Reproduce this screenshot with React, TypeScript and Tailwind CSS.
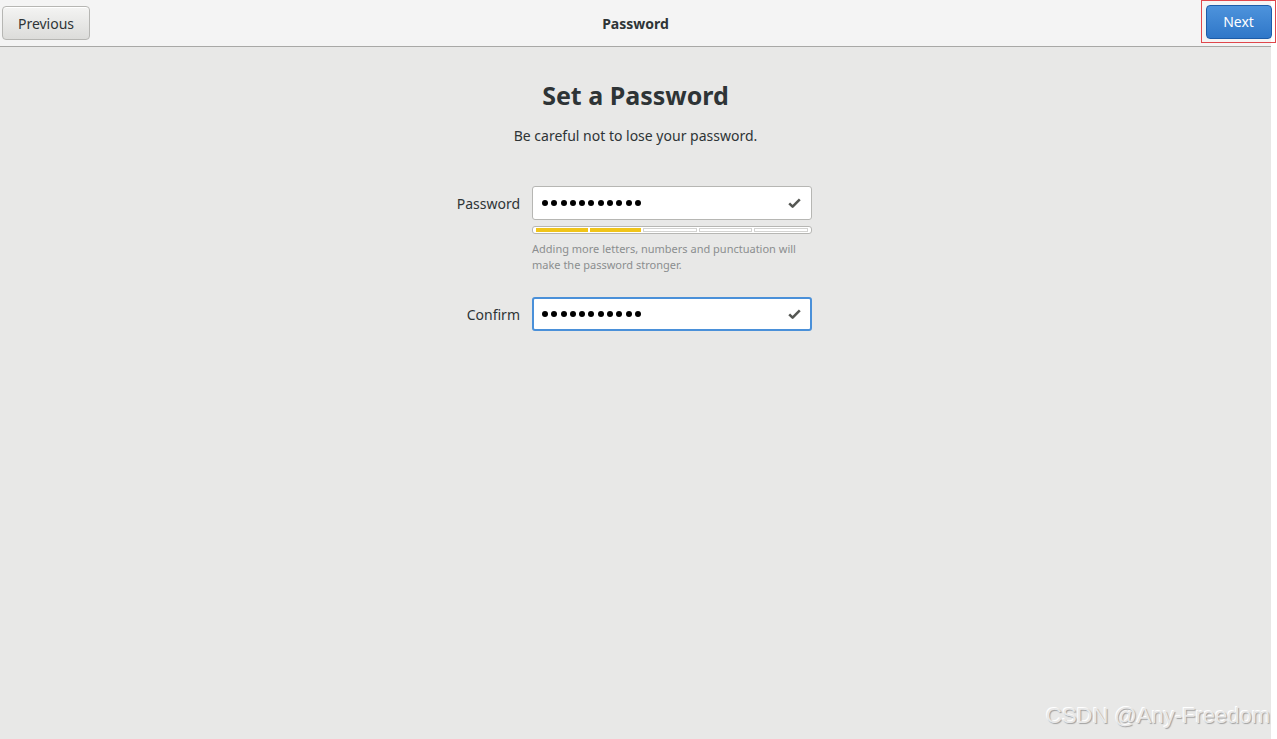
import React from "react";

const FONT = { fontFamily: '"Noto Sans", "Open Sans", sans-serif' };

function Dots({ n }: { n: number }) {
  return (
    <div className="flex items-center gap-[3.3px]">
      {Array.from({ length: n }).map((_, i) => (
        <span key={i} className="block w-[6px] h-[6px] rounded-full bg-[#000000]" />
      ))}
    </div>
  );
}

function Check() {
  return (
    <svg width="13" height="10" viewBox="0 0 13 10" className="shrink-0">
      <path d="M1.2 5.4 L4.6 8.6 L11.8 1.4" fill="none" stroke="#555753" strokeWidth="2.6" strokeLinejoin="round" />
    </svg>
  );
}

function PasswordField({ focused }: { focused?: boolean }) {
  return (
    <div
      className={`h-[34px] w-[280px] rounded-[3px] bg-white flex items-center justify-between ${
        focused ? "border-2 border-[#4a90d9] pl-[8px] pr-[9px]" : "border border-[#b6b6b3] pl-[9px] pr-[10px]"
      }`}
    >
      <Dots n={11} />
      <Check />
    </div>
  );
}

function Strength({ level }: { level: number }) {
  return (
    <div className="h-[8px] w-[280px] rounded-[3px] border border-[#b6b6b3] bg-white flex items-center gap-[2px] px-[3px]">
      {[0, 1, 2, 3, 4].map((i) => (
        <span
          key={i}
          className={`flex-1 h-[4px] ${i < level ? "bg-[#f0c419]" : "bg-white border border-[#d3d3d1]"}`}
        />
      ))}
    </div>
  );
}

export default function App() {
  return (
    <div className="w-[1277px] h-[739px] bg-white flex overflow-hidden relative" style={FONT}>
      <div className="w-[1271px] h-full bg-[#e8e8e7] flex flex-col">
        <header className="h-[47px] shrink-0 bg-[#f4f4f4] border-b border-[#a8a8a6] grid grid-cols-[1fr_auto_1fr] items-center px-[2px]">
          <div className="flex">
            <button className="h-[34px] w-[88px] rounded-[4px] border border-[#b6b6b3] bg-gradient-to-b from-[#f4f4f3] to-[#dcdcda] text-[14px] text-[#2e3436] shadow-[inset_0_1px_0_#ffffff]">
              Previous
            </button>
          </div>
          <div className="text-[14px] font-bold text-[#2e3436]">Password</div>
          <div className="flex justify-end">
            <div className="w-[75px] h-[43px] border border-[#e0474c] flex items-center justify-center -mr-[7px] -mt-[3px]">
              <button className="h-[34px] w-[66px] rounded-[4px] border border-[#1c5ca8] bg-gradient-to-b from-[#4d93dc] to-[#2f77c8] text-[14px] text-white">
                Next
              </button>
            </div>
          </div>
        </header>

        <main className="flex flex-col">
          <h1 className="mt-[32px] text-center text-[25px] leading-[32px] font-bold text-[#2e3436]">Set a Password</h1>
          <p className="mt-[15px] text-center text-[14px] leading-[20px] text-[#2e3436]">
            Be careful not to lose your password.
          </p>

          <div className="mt-[40px] ml-[446px] grid grid-cols-[74px_280px] gap-x-[12px]">
            <div className="h-[34px] flex items-center justify-end text-[14px] text-[#2e3436]">Password</div>
            <PasswordField />
            <div />
            <div className="mt-[6px]">
              <Strength level={2} />
              <p className="mt-[7px] text-[11px] leading-[16px] text-[#8b8e8f] w-[280px]">
                Adding more letters, numbers and punctuation will make the password stronger.
              </p>
            </div>
            <div className="mt-[24px] h-[34px] flex items-center justify-end text-[14px] text-[#2e3436]">Confirm</div>
            <div className="mt-[24px]">
              <PasswordField focused />
            </div>
          </div>
        </main>
      </div>

      <div
        className="absolute left-[1046px] top-[702px] text-[22px] leading-[28px] text-[#e8e8e8] whitespace-nowrap"
        style={{ fontFamily: '"Liberation Sans", Arial, sans-serif', textShadow: "1px 1px 1px #a0a0a0, -1px -1px 0 #ffffff" }}
      >
        CSDN @Any-Freedom
      </div>
    </div>
  );
}
